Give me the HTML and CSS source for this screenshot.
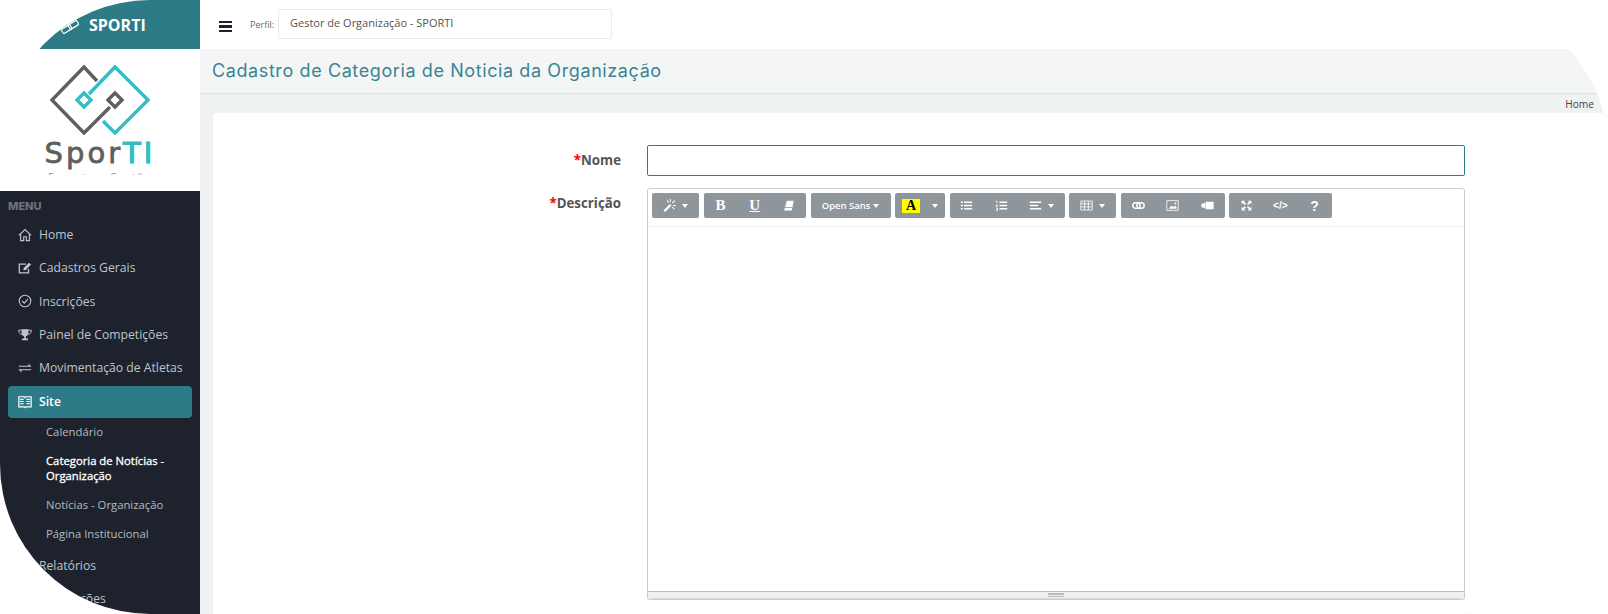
FILE: index.html
```html
<!DOCTYPE html>
<html lang="pt-BR">
<head>
    <meta charset="UTF-8">
    <title>Cadastro de Categoria de Noticia da Organização</title>
    <link rel="stylesheet" href="styles.css">
</head>
<body>
<div class="app">
    <aside class="sidebar">
        <div class="brand">
            <svg class="brand-icon" viewBox="0 0 20 12"><g fill="none" stroke="#fff" stroke-width="1.200" transform="rotate(-32 10 6)"><rect x="1" y="3.500" width="10" height="5" rx="1"/><rect x="9" y="3.500" width="10" height="5" rx="1"/></g></svg>
            <span>SPORTI</span>
        </div>
        <div class="logo-box">
            <svg class="logo-mark" viewBox="40 10 120 78">
                <g fill="none" stroke-width="3.400" stroke-linejoin="miter">
                    <path d="M97 34 84 20 52 53 84 86 110 60" stroke="#5f5f5f"/>
                    <path d="M115 46 122 53 115 60 108 53Z" stroke="#5f5f5f"/>
                    <path d="M84 46 91 53 84 60 77 53Z" stroke="#35bcc4"/>
                    <path d="M89 47 115 20 148 53 115 86 103 74" stroke="#35bcc4"/>
                </g>
            </svg>
            <div class="logo-name">Spor<b>TI</b></div>
            <div class="logo-tag">Esporte e Gestão</div>
        </div>
        <nav class="menu">
            <div class="menu-title">MENU</div>
            <a class="menu-item">
                <svg class="mi" viewBox="0 0 16 16"><path d="M1 8.500 8 1.800l7 6.700M3 7v7.500h3.500V10h3v4.500H13V7" fill="none" stroke="currentColor" stroke-width="1.300"/></svg>
                Home</a>
            <a class="menu-item">
                <svg class="mi" viewBox="0 0 16 16"><path d="M12 9v4.500H1.500v-10H9" fill="none" stroke="currentColor" stroke-width="1.500"/><path d="M6 10.500 6.500 8l6-6 2.500 2-6 6.200z" fill="currentColor"/></svg>
                Cadastros Gerais</a>
            <a class="menu-item">
                <svg class="mi" viewBox="0 0 16 16"><circle cx="8" cy="8" r="6.600" fill="none" stroke="currentColor" stroke-width="1.300"/><path d="m4.800 8 2.300 2.400 4.200-4.600" fill="none" stroke="currentColor" stroke-width="1.300"/></svg>
                Inscrições</a>
            <a class="menu-item">
                <svg class="mi" viewBox="0 0 16 16"><path d="M4 1.500h8v3c0 3-1.500 4.500-3 5v2.500h2.500v2h-7v-2H7V9.500C5.500 9 4 7.500 4 4.500z" fill="currentColor"/><path d="M4 2.500H.8c0 3 1.200 4.500 4 5M12 2.500h3.200c0 3-1.200 4.500-4 5" fill="none" stroke="currentColor" stroke-width="1.100"/></svg>
                Painel de Competições</a>
            <a class="menu-item">
                <svg class="mi" viewBox="0 0 16 16"><path d="M1 5.300h11V3l3.500 3.500H1zM15 10.700H4V13L.5 9.500H15z" fill="currentColor"/></svg>
                Movimentação de Atletas</a>
            <a class="menu-item active">
                <svg class="mi" viewBox="0 0 16 16"><path d="M1 2h6l1 1 1-1h6v11.500H9l-1 1-1-1H1z" fill="none" stroke="currentColor" stroke-width="1.400"/><path d="M2.500 5h4M2.500 7.500h4M2.500 10h4M9.500 5h4M9.500 7.500h4M9.500 10h4" stroke="currentColor" stroke-width="1.200"/></svg>
                Site</a>
            <ul class="submenu">
                <li>Calendário</li>
                <li class="current">Categoria de Notícias - Organização</li>
                <li>Notícias - Organização</li>
                <li>Página Institucional</li>
            </ul>
            <a class="menu-item">
                <svg class="mi" viewBox="0 0 16 16"><path d="M2 2h12v12H2z" fill="none" stroke="currentColor"/></svg>
                Relatórios</a>
            <a class="menu-item">
                <svg class="mi" viewBox="0 0 16 16"><path d="M2 2h12v12H2z" fill="none" stroke="currentColor"/></svg>
                Publicações</a>
        </nav>
    </aside>

    <main class="main">
        <header class="topbar">
            <button class="burger"><i></i><i></i><i></i></button>
            <label class="profile-label">Perfil:</label>
            <div class="profile-select">Gestor de Organização - SPORTI</div>
        </header>
        <div class="page-title"><h1>Cadastro de Categoria de Noticia da Organização</h1></div>
        <div class="crumbs">Home</div>
        <div class="content">
            <section class="card">
                <div class="form-row">
                    <label class="form-label"><em>*</em>Nome</label>
                    <input class="form-input" type="text">
                </div>
                <div class="form-row">
                    <label class="form-label desc"><em>*</em>Descrição</label>
                    <div class="editor">
                        <div class="toolbar">
                            <div class="tool-group">
                                <span class="tool w1">
                                    <svg class="ti" viewBox="0 0 16 16"><path d="M.5 14 8.500 6l2 2-8 8z" fill="#fff"/><path d="M9 0v3.500M14.500 2l-3 3M16 8h-3.500M5 2l2 2.500M14 12.500 11.500 10" stroke="#fff" stroke-width="1.300"/></svg>
                                    <i class="caret"></i>
                                </span>
                            </div>
                            <div class="tool-group">
                                <span class="tool w2 bold-b">B</span>
                                <span class="tool w2 bold-u">U</span>
                                <span class="tool w2"><svg class="ti" viewBox="0 0 16 16"><path d="M6 2h8.500l-2.500 12H2.500z" fill="#fff"/><path d="M3.500 10.500h9" stroke="#8e969c"/></svg></span>
                            </div>
                            <div class="tool-group">
                                <span class="tool w3">Open Sans<i class="caret"></i></span>
                            </div>
                            <div class="tool-group">
                                <span class="tool w4"><b class="color-a">A</b><i class="caret"></i></span>
                            </div>
                            <div class="tool-group">
                                <span class="tool w2"><svg class="ti" viewBox="0 0 16 16"><path d="M1 3h2.500v2H1zM1 7h2.500v2H1zM1 11h2.500v2H1zM5 3h10v2H5zM5 7h10v2H5zM5 11h10v2H5z" fill="#fff"/></svg></span>
                                <span class="tool w2"><svg class="ti" viewBox="0 0 16 16"><path d="M5.500 3H15v2H5.500zM5.500 7H15v2H5.500zM5.500 11H15v2H5.500zM1 2h2v3H2V3H1zM1 7h2.500v1L2 9.500h1.500v.8H1v-1L2.500 8H1zM1 11h2.500v3.500H1v-.8h1.500v-.6H1.500v-.6h1v-.7H1z" fill="#fff"/></svg></span>
                                <span class="tool w5"><svg class="ti" viewBox="0 0 16 16"><path d="M1 3h14v2H1zM1 7h10v2H1zM1 11h14v2H1z" fill="#fff"/></svg><i class="caret"></i></span>
                            </div>
                            <div class="tool-group">
                                <span class="tool w1"><svg class="ti" viewBox="0 0 16 16"><path d="M1 2.500h14v11H1zM1 6h14M1 9.700h14M5.700 2.500v11M10.300 2.500v11" fill="none" stroke="#fff"/></svg><i class="caret"></i></span>
                            </div>
                            <div class="tool-group">
                                <span class="tool w2"><svg class="ti" viewBox="0 0 16 16"><rect x="1" y="4.500" width="9" height="7" rx="3.500" fill="none" stroke="#fff" stroke-width="1.800"/><rect x="6" y="4.500" width="9" height="7" rx="3.500" fill="none" stroke="#fff" stroke-width="1.800"/></svg></span>
                                <span class="tool w2"><svg class="ti" viewBox="0 0 16 16"><path d="M1 2h14v12H1z" fill="none" stroke="#fff"/><path d="m3 12 4-4 2 2 2-2 2 2v2z" fill="#fff"/><circle cx="11.500" cy="5.500" r="1.200" fill="#fff"/></svg></span>
                                <span class="tool w2"><svg class="ti" viewBox="0 0 16 16"><path d="M5.500 3.500H15.500v9H5.500zM.5 6l4.500-1v6L.5 10z" fill="#fff"/></svg></span>
                            </div>
                            <div class="tool-group">
                                <span class="tool w2"><svg class="ti" viewBox="0 0 16 16"><path d="M2 2h4.500L5 3.500 7.500 6 6 7.500 3.500 5 2 6.500zM14 2v4.500L12.500 5 10 7.500 8.500 6 11 3.500 9.500 2zM2 14V9.500L3.500 11 6 8.500 7.500 10 5 12.500 6.500 14zM14 14H9.500l1.500-1.500L8.500 10 10 8.500l2.500 2.500L14 9.500z" fill="#fff"/></svg></span>
                                <span class="tool w2 code">&lt;/&gt;</span>
                                <span class="tool w2 help">?</span>
                            </div>
                        </div>
                        <div class="editor-body"></div>
                        <div class="resize-bar"><i></i></div>
                    </div>
                </div>
            </section>
        </div>
    </main>
</div>
</body>
</html>
```

FILE: styles.css
```css
* {
    box-sizing: border-box;
}

html, body {
    margin: 0;
    height: 100%;
    overflow: hidden;
    background-color: #fff;
}

body {
    font-family: "Open Sans", sans-serif;
    font-size: 12px;
    color: #555;
}

.app {
    display: flex;
    height: 614px;
    border-radius: 150px;
    overflow: hidden;
    background-color: #fff;
}

/* sidebar */
.sidebar {
    width: 200px;
    flex-shrink: 0;
    display: flex;
    flex-direction: column;
    overflow: hidden;
}

.brand {
    height: 49px;
    flex-shrink: 0;
    display: flex;
    align-items: center;
    padding-left: 60px;
    background-color: #2e7b88;
    color: #fff;
    font-size: 16px;
    font-weight: 700;
}

.brand-icon {
    width: 20px;
    height: 12px;
    margin-right: 9px;
    margin-top: 5px;
    overflow: visible;
}

.logo-box {
    height: 142px;
    flex-shrink: 0;
    background-color: #fff;
    display: flex;
    flex-direction: column;
    align-items: center;
    overflow: hidden;
}

.logo-mark {
    width: 120px;
    height: 78px;
    margin-top: 8px;
    flex-shrink: 0;
}

.logo-name {
    font-family: "DejaVu Sans", sans-serif;
    font-size: 29px;
    line-height: 30px;
    letter-spacing: 3px;
    -webkit-text-stroke: 0.800px currentColor;
    color: #5f5f5f;
    height: 33px;
    margin-top: 3px;
    flex-shrink: 0;
}

.logo-name b {
    font-weight: 400;
    color: #35bcc4;
    -webkit-text-stroke: 1.200px currentColor;
}

.logo-tag {
    height: 4px;
    flex-shrink: 0;
    overflow: hidden;
    font-size: 9px;
    line-height: 12px;
    color: #888;
    letter-spacing: 2px;
}

.menu {
    flex: 1;
    min-height: 0;
    padding: 8px 8px 0;
    background-color: #1e222c;
}

.menu-title {
    font-family: "Inter", sans-serif;
    font-size: 11px;
    font-weight: 800;
    line-height: 14px;
    color: #6c7280;
    margin-bottom: 5px;
}

.menu-item {
    display: flex;
    align-items: center;
    height: 33.300px;
    padding-left: 10px;
    color: #bfc5cc;
    font-size: 12.200px;
    white-space: nowrap;
    border-radius: 4px;
}

.menu-item.active {
    height: 32px;
    margin-top: 1.500px;
    background-color: #2e7b88;
    color: #fff;
    font-weight: 600;
}

.mi {
    width: 14px;
    height: 14px;
    margin-right: 7px;
    flex-shrink: 0;
}

.submenu {
    list-style: none;
    margin: 0;
    padding: 6.500px 10px 7px 38px;
    font-size: 11.300px;
    line-height: 15px;
    color: #b4bbc4;
}

.submenu li {
    margin-bottom: 14px;
}

.submenu li:last-child {
    margin-bottom: 0;
}

.submenu .current {
    color: #fff;
    -webkit-text-stroke: 0.300px currentColor;
}

/* main column */
.main {
    flex: 1;
    min-width: 0;
    display: flex;
    flex-direction: column;
}

.topbar {
    height: 49px;
    flex-shrink: 0;
    display: flex;
    align-items: center;
    background-color: #fff;
}

.burger {
    width: 50px;
    height: 49px;
    padding: 4px 0 0;
    border: none;
    background: none;
    display: flex;
    flex-direction: column;
    align-items: center;
    justify-content: center;
    gap: 2px;
}

.burger i {
    width: 13px;
    height: 2.500px;
    background-color: #1e222c;
}

.profile-label {
    font-size: 9px;
    color: #666;
    width: 28px;
}

.profile-select {
    width: 334px;
    height: 30px;
    margin-bottom: 1px;
    padding: 6px 11px;
    border: 1px solid #e9ecef;
    border-radius: 2px;
    font-size: 11px;
    line-height: 14px;
    color: #555;
}

.page-title {
    height: 45px;
    flex-shrink: 0;
    background-color: #f4f6f6;
    border-bottom: 1px solid #dcdfe4;
    padding-left: 12px;
}

.page-title h1 {
    margin: 0;
    font-family: "Inter", sans-serif;
    font-size: 18px;
    font-weight: 400;
    line-height: 44px;
    letter-spacing: 0.600px;
    color: #3a8494;
}

.crumbs {
    height: 19px;
    flex-shrink: 0;
    background-color: #eff2f3;
    text-align: right;
    padding-right: 14px;
    font-size: 10.200px;
    line-height: 20px;
    color: #444;
}

.content {
    flex: 1;
    min-height: 0;
    background-color: #eff2f3;
    padding-left: 13px;
}

.card {
    height: 100%;
    background-color: #fff;
    border-radius: 4px 0 0 0;
    padding-top: 32px;
}

.form-row {
    display: flex;
    margin-bottom: 12px;
}

.form-label {
    width: 408px;
    text-align: right;
    font-size: 13.300px;
    font-weight: 700;
    line-height: 31px;
    color: #555;
    margin-right: 26px;
}

.form-label.desc {
    line-height: 30px;
}

.form-label em {
    font-style: normal;
    color: #f00;
}

.form-input {
    width: 818px;
    height: 31px;
    border: 1px solid #2e7b88;
    border-radius: 2px;
    outline: none;
}

/* editor */
.editor {
    width: 818px;
    height: 412px;
    display: flex;
    flex-direction: column;
    border: 1px solid #ccc;
    border-radius: 3px;
}

.toolbar {
    height: 38px;
    flex-shrink: 0;
    display: flex;
    gap: 4.500px;
    padding: 4px 0 0 4px;
    border-bottom: 1px solid #eef0f3;
}

.tool-group {
    display: flex;
    height: 25px;
    background-color: #8e969c;
    border-radius: 2px;
    color: #fff;
}

.tool {
    display: flex;
    align-items: center;
    justify-content: center;
    height: 25px;
}

.w1 { width: 47px; gap: 6px; }
.w2 { width: 34.600px; }
.w3 { width: 80px; font-size: 9.500px; font-weight: 600; gap: 3px; }
.w4 { width: 50px; gap: 12px; justify-content: flex-start; padding-left: 7px; }
.w5 { width: 46px; gap: 6px; }

.tool-group:nth-child(2) .w2,
.tool-group:nth-child(8) .w2 {
    width: 34.200px;
}

.ti {
    width: 13px;
    height: 13px;
}

.caret {
    width: 0;
    height: 0;
    border-left: 3px solid transparent;
    border-right: 3px solid transparent;
    border-top: 4px solid #fff;
}

.bold-b, .bold-u {
    font-family: "Liberation Serif", serif;
    font-size: 15px;
    font-weight: 700;
}

.bold-u {
    text-decoration: underline;
}

.color-a {
    display: block;
    width: 18px;
    height: 14px;
    background-color: #ff0;
    color: #000;
    font-family: "Liberation Serif", serif;
    font-size: 14px;
    line-height: 14px;
    text-align: center;
}

.code {
    font-family: "Liberation Sans", sans-serif;
    font-size: 10px;
    font-weight: 700;
}

.help {
    font-family: "Liberation Sans", sans-serif;
    font-size: 14px;
    font-weight: 700;
}

.editor-body {
    flex: 1;
}

.resize-bar {
    height: 8px;
    flex-shrink: 0;
    display: flex;
    align-items: center;
    justify-content: center;
    background-color: #f0f0f0;
    border-top: 1px solid #bbb;
    border-bottom: 1px solid #ddd;
}

.resize-bar i {
    width: 16px;
    height: 4px;
    border-top: 2px solid #bbb;
    border-bottom: 1px solid #bbb;
}
```
